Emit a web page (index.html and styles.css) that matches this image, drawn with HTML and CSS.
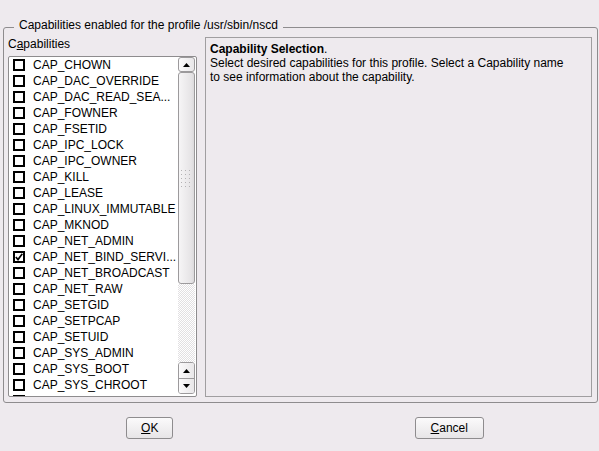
FILE: index.html
```html
<!DOCTYPE html>
<html lang="en">
<head>
    <meta charset="UTF-8">
    <title>Capabilities</title>
    <link rel="stylesheet" href="styles.css">
</head>
<body>
    <fieldset class="group">
        <legend>Capabilities enabled for the profile /usr/sbin/nscd</legend>
        <div class="group-body">
            <div class="cap-column">
                <div class="cap-label">C<u>a</u>pabilities</div>
                <div class="cap-list">
                    <ul class="cap-rows">
                        <li><span class="check"></span>CAP_CHOWN</li>
                        <li><span class="check"></span>CAP_DAC_OVERRIDE</li>
                        <li><span class="check"></span>CAP_DAC_READ_SEA...</li>
                        <li><span class="check"></span>CAP_FOWNER</li>
                        <li><span class="check"></span>CAP_FSETID</li>
                        <li><span class="check"></span>CAP_IPC_LOCK</li>
                        <li><span class="check"></span>CAP_IPC_OWNER</li>
                        <li><span class="check"></span>CAP_KILL</li>
                        <li><span class="check"></span>CAP_LEASE</li>
                        <li><span class="check"></span>CAP_LINUX_IMMUTABLE</li>
                        <li><span class="check"></span>CAP_MKNOD</li>
                        <li><span class="check"></span>CAP_NET_ADMIN</li>
                        <li><span class="check checked"><svg width="8" height="8" viewBox="0 0 8 8"><path d="M0.8 4 L3 6.6 L7.3 0.8" fill="none" stroke="#000" stroke-width="1.7"/></svg></span>CAP_NET_BIND_SERVI...</li>
                        <li><span class="check"></span>CAP_NET_BROADCAST</li>
                        <li><span class="check"></span>CAP_NET_RAW</li>
                        <li><span class="check"></span>CAP_SETGID</li>
                        <li><span class="check"></span>CAP_SETPCAP</li>
                        <li><span class="check"></span>CAP_SETUID</li>
                        <li><span class="check"></span>CAP_SYS_ADMIN</li>
                        <li><span class="check"></span>CAP_SYS_BOOT</li>
                        <li><span class="check"></span>CAP_SYS_CHROOT</li>
                        <!-- next row is scrolled mostly out of view -->
                        <li aria-hidden="true"><span class="check"></span></li>
                    </ul>
                    <div class="scrollbar">
                        <div class="sb-button">
                            <svg width="7" height="4" viewBox="0 0 7 4"><polygon points="3.5,0 7,4 0,4" fill="#000"/></svg>
                        </div>
                        <div class="sb-thumb">
                            <svg width="11" height="17" viewBox="0 0 11 17">
                                <defs>
                                    <pattern id="grip" width="4" height="4" patternUnits="userSpaceOnUse">
                                        <rect width="1" height="1" fill="#b4b2b4"/>
                                    </pattern>
                                </defs>
                                <rect width="11" height="17" fill="url(#grip)"/>
                            </svg>
                        </div>
                        <div class="sb-track"></div>
                        <div class="sb-pair">
                            <div class="sb-half">
                                <svg width="7" height="4" viewBox="0 0 7 4"><polygon points="3.5,0 7,4 0,4" fill="#000"/></svg>
                            </div>
                            <div class="sb-half">
                                <svg width="7" height="4" viewBox="0 0 7 4"><polygon points="0,0 7,0 3.5,4" fill="#000"/></svg>
                            </div>
                        </div>
                    </div>
                </div>
            </div>
            <div class="info-panel">
                <p><b>Capability Selection</b>.<br>
                Select desired capabilities for this profile. Select a Capability name<br>
                to see information about the capability.</p>
            </div>
        </div>
    </fieldset>

    <div class="buttons">
        <div class="button-cell"><button class="btn ok"><u>O</u>K</button></div>
        <div class="button-cell"><button class="btn cancel"><u>C</u>ancel</button></div>
    </div>
</body>
</html>
```

FILE: styles.css
```css
body {
    margin: 0;
    background-color: #eeeaee;
    font-family: "Liberation Sans", Arial, sans-serif;
    font-size: 12px;
    line-height: 14px;
    color: #000;
}

.group {
    margin: 18px 1px 0 3px;
    padding: 0 5px 5px 4px;
    border: 1px solid #8e8c8e;
    border-radius: 3px;
    min-width: 0;
}

.group legend {
    margin-left: 6px;
    padding: 0 5px 5px 5px;
    line-height: 14px;
}

.group-body {
    display: flex;
    gap: 8px;
    height: 360px;
}

.cap-column {
    width: 189px;
    display: flex;
    flex-direction: column;
}

.cap-label {
    height: 14px;
    margin-bottom: 5px;
}

.cap-list {
    flex: 1;
    display: flex;
    background-color: #fff;
    border: 1px solid #8e8c8e;
    border-radius: 2px;
    overflow: hidden;
}

.cap-rows {
    list-style-type: none;
    margin: 0;
    padding: 0;
    flex: 1;
    overflow: hidden;
}

.cap-rows li {
    display: flex;
    align-items: center;
    height: 16px;
    box-sizing: border-box;
    padding: 0 0 1px 4px;
    white-space: nowrap;
}

.check {
    width: 12px;
    height: 12px;
    box-sizing: border-box;
    border: 2px solid #000;
    margin-right: 8px;
    flex: none;
    display: flex;
    align-items: center;
    justify-content: center;
    background-color: #fff;
}

.check svg {
    display: block;
}

.scrollbar {
    width: 17px;
    display: flex;
    flex-direction: column;
    padding: 0 1px 2px 0;
}

.sb-button,
.sb-half {
    height: 15px;
    box-sizing: border-box;
    display: flex;
    align-items: center;
    justify-content: center;
    background: linear-gradient(to right, #fbfafb, #e9e7e9);
}

.sb-button {
    border: 1px solid #9c9a9c;
    border-radius: 3px;
}

.sb-thumb {
    height: 212px;
    box-sizing: border-box;
    border: 1px solid #9c9a9c;
    border-radius: 3px;
    background: linear-gradient(to right, #f6f5f6, #e6e4e6 80%, #dcdadc);
    display: flex;
    align-items: center;
    justify-content: center;
}

.sb-track {
    flex: 1;
    background-color: #fff;
    background-image: repeating-conic-gradient(#e2e0e2 0 25%, #fff 0 50%);
    background-size: 2px 2px;
}

.sb-pair {
    border: 1px solid #9c9a9c;
    border-radius: 3px;
    overflow: hidden;
}

.sb-half {
    height: 15px;
}

.sb-half + .sb-half {
    border-top: 1px solid #9c9a9c;
}

.info-panel {
    flex: 1;
    border: 1px solid #a09ea0;
    padding: 4px 4px;
}

.info-panel p {
    margin: 0;
}

.buttons {
    display: grid;
    grid-template-columns: 1fr 1fr;
    margin-top: 14px;
}

.button-cell {
    display: flex;
    justify-content: center;
}

.btn {
    height: 22px;
    font-family: "Liberation Sans", Arial, sans-serif;
    font-size: 12px;
    color: #000;
    background: linear-gradient(to bottom, #fbfafb, #e7e5e7);
    border: 1px solid #8e8c8e;
    border-radius: 3px;
    padding: 0;
}

.btn.ok {
    width: 47px;
}

.btn.cancel {
    width: 69px;
}
```
